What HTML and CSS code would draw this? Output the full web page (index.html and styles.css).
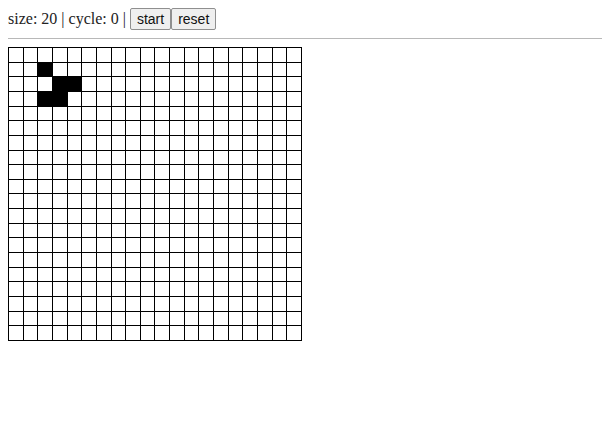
FILE: index.html
```html
<!DOCTYPE html>
<html>
<head>
<meta charset="utf-8">
<link rel="stylesheet" href="styles.css">
</head>
<body>
<div class="bar"><span class="info">size: 20 | cycle: 0 | </span><button class="btn">start</button><button class="btn">reset</button></div>
<hr class="rule">
<div class="board" id="board"></div>
<script>
  var live = {"1,2":1,"2,3":1,"2,4":1,"3,2":1,"3,3":1};
  var b = document.getElementById('board');
  for (var r = 0; r < 20; r++) {
    for (var c = 0; c < 20; c++) {
      var d = document.createElement('div');
      d.className = 'cell' + (live[r + ',' + c] ? ' alive' : '');
      b.appendChild(d);
    }
  }
</script>
</body>
</html>
```

FILE: styles.css
```css
html, body { background: #fff; }
body {
  margin: 8px;
  font-family: "Liberation Serif", "Times New Roman", serif;
  font-size: 16px;
  color: #222;
}
.bar {
  display: flex;
  align-items: center;
  height: 22px;
}
.info { white-space: pre; }
.btn {
  font-family: "Liberation Sans", Arial, sans-serif;
  font-size: 14px;
  color: #111;
  background: #efefef;
  border: 1px solid #8f8f8f;
  border-radius: 2px;
  padding: 0 6px;
  height: 22px;
  margin: 0;
}
.rule {
  margin: 8px 0;
  border: none;
  border-top: 1px solid #b8b8b8;
  height: 0;
}
.board {
  width: 294px;
  height: 294px;
  display: grid;
  grid-template-columns: repeat(20, 1fr);
  grid-template-rows: repeat(20, 1fr);
  border-left: 1px solid #000;
  border-top: 1px solid #000;
  box-sizing: border-box;
}
.cell {
  border-right: 1px solid #000;
  border-bottom: 1px solid #000;
  background: #fff;
}
.cell.alive { background: #000; }
```
